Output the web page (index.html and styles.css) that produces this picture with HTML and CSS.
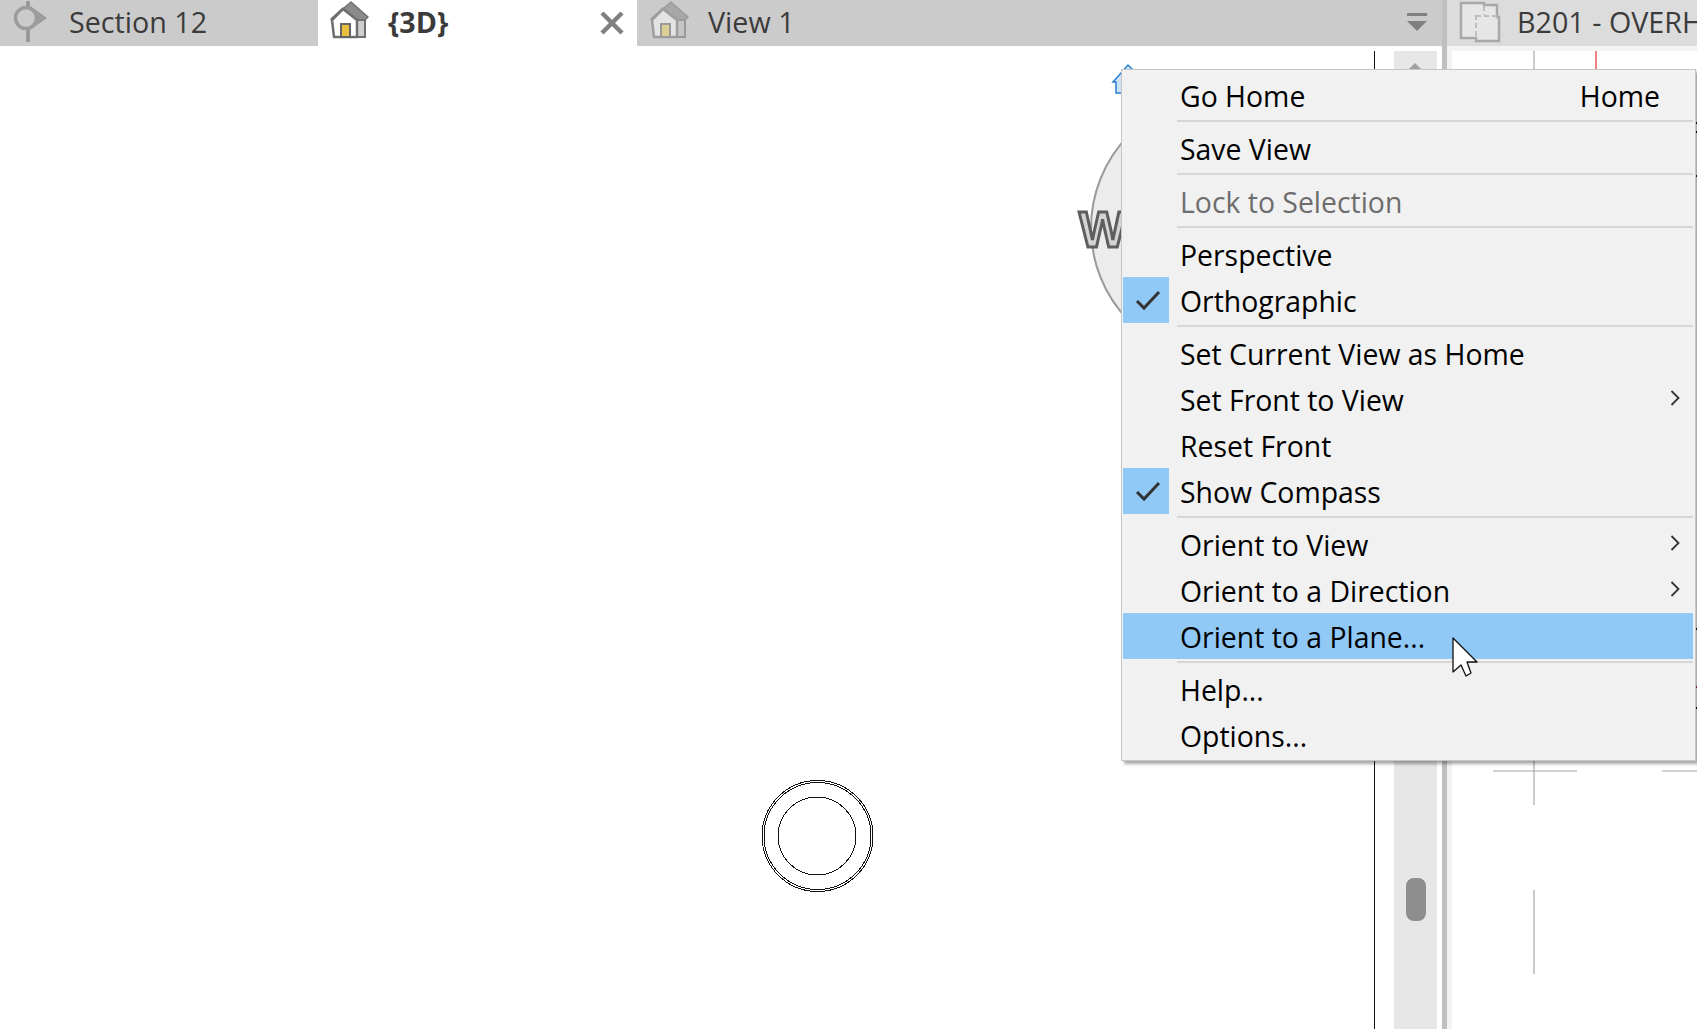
FILE: index.html
```html
<!DOCTYPE html>
<html lang="en">
<head>
<meta charset="utf-8">
<title>View cube menu</title>
<link rel="stylesheet" href="styles.css">
</head>
<body>
<div class="app">
  <div class="left-pane">
    <div class="tabs">
      <div class="tab tab-one">
        <svg class="tab-icon" viewBox="0 0 60 46" width="60" height="46"><path d="M28 1v7M28 29v13" stroke="#939393" stroke-width="3.500"/><path d="M30 6l17 12-17 12z" fill="#9c9c9c"/><circle cx="26" cy="18" r="10.500" fill="#cbcbcb" stroke="#9c9c9c" stroke-width="3.500"/></svg>
        <span class="tab-label">Section 12</span>
      </div>
      <div class="tab tab-active">
        <svg class="tab-icon" viewBox="0 0 60 46" width="60" height="46"><path d="M37 20h8v17h-8z" fill="#cfcfcf" stroke="#6f6f6f" stroke-width="2"/><path d="M11 19L31 2l17 15-3 3-8 0-14-12z" fill="#8b8b8b" stroke="#6f6f6f" stroke-width="1.500" stroke-linejoin="round"/><path d="M12 20L23 9l14 11v17H14z" fill="#fff" stroke="#6f6f6f" stroke-width="2.500" stroke-linejoin="round"/><rect x="21" y="24" width="9" height="13" fill="#e9bf3e" stroke="#666" stroke-width="2"/></svg>
        <span class="tab-label tab-label-bold">{3D}</span>
        <svg class="tab-close" viewBox="0 0 24 24" width="24" height="24"><path d="M2 2l20 20M22 2L2 22" stroke="#808080" stroke-width="4.500"/></svg>
      </div>
      <div class="tab tab-rest">
        <svg class="tab-icon" viewBox="0 0 60 46" width="60" height="46"><path d="M37 20h8v17h-8z" fill="#c6c6c6" stroke="#9a9a9a" stroke-width="2"/><path d="M11 19L31 2l17 15-3 3-8 0-14-12z" fill="#a8a8a8" stroke="#9a9a9a" stroke-width="1.500" stroke-linejoin="round"/><path d="M12 20L23 9l14 11v17H14z" fill="#e4e4e4" stroke="#9e9e9e" stroke-width="2.500" stroke-linejoin="round"/><rect x="21" y="24" width="9" height="13" fill="#dccf96" stroke="#9a9a9a" stroke-width="2"/></svg>
        <span class="tab-label">View 1</span>
        <svg class="tab-menu" viewBox="0 0 20 20" width="20" height="20"><rect x="0" y="0" width="20" height="3" fill="#7f7f7f"/><path d="M0 8h20L10 18z" fill="#7f7f7f"/></svg>
      </div>
    </div>
    <div class="canvas">
      <svg class="canvas-art" viewBox="0 0 1442 983" width="1442" height="983">
        <g fill="none" stroke="#111" stroke-width="1" shape-rendering="crispEdges">
          <circle cx="817.500" cy="790" r="55.500"/><circle cx="817.500" cy="790" r="53.500"/><circle cx="817" cy="790" r="39"/>
        </g>
        <circle cx="1224" cy="182" r="133" fill="#ececec" stroke="#9a9a9a" stroke-width="2"/>
        <path d="M1116 47V36h-3L1128 19l12 12v16z" fill="#cfe3f7" stroke="#2a7fd4" stroke-width="1.500"/>
      </svg>
      <span class="cube-letter">W</span>
      <div class="black-line"></div>
      <div class="scroll-track">
        <span class="scroll-arrow"></span>
        <span class="scroll-thumb"></span>
      </div>
    </div>
  </div>
  <div class="divider"></div>
  <div class="right-pane">
    <div class="tab tab-sheet">
      <svg class="tab-icon" viewBox="0 0 42 44" width="42" height="44"><path d="M2 2H25V4H38V16H40V40H17V37H2z" fill="#e6e6e6" stroke="#a8a8a8" stroke-width="2.500"/><path d="M17 14v22M25 5v9M17 15H38" fill="none" stroke="#bdbdbd" stroke-width="2" stroke-dasharray="5 3"/></svg>
      <span class="tab-label">B201 - OVERH</span>
    </div>
    <div class="sheet">
      <svg class="sheet-art" viewBox="0 0 245 978" width="245" height="978">
        <g stroke="#a8a8a8" stroke-width="1.200" fill="none">
          <path d="M82 0v754M41 720h84M210 720h40M82 839v84"/>
        </g>
        <path d="M144 0v30" stroke="#e03030" stroke-width="1.200"/>
        <path d="M244 71v2M244 80v2M244 124v2M244 577v2M244 656v2" stroke="#111" stroke-width="2"/>
        <path d="M244 635v2" stroke="#c03030" stroke-width="2"/>
      </svg>
    </div>
  </div>
</div>

<div class="menu">
  <div class="row"><span class="gutter"></span><span class="label">Go Home</span><span class="label shortcut">Home</span></div>
  <div class="sep"></div>
  <div class="row"><span class="gutter"></span><span class="label">Save View</span></div>
  <div class="sep"></div>
  <div class="row row-disabled"><span class="gutter"></span><span class="label">Lock to Selection</span></div>
  <div class="sep"></div>
  <div class="row"><span class="gutter"></span><span class="label">Perspective</span></div>
  <div class="row"><span class="gutter gutter-on"><svg class="check" viewBox="0 0 26 22" width="26" height="22"><path d="M2 12l7 7L24 3" fill="none" stroke="#333" stroke-width="3"/></svg></span><span class="label">Orthographic</span></div>
  <div class="sep"></div>
  <div class="row"><span class="gutter"></span><span class="label">Set Current View as Home</span></div>
  <div class="row"><span class="gutter"></span><span class="label">Set Front to View</span><svg class="chev" viewBox="0 0 10 16" width="10" height="16"><path d="M1.500 1L8.500 8l-7 7" fill="none" stroke="#333" stroke-width="1.800"/></svg></div>
  <div class="row"><span class="gutter"></span><span class="label">Reset Front</span></div>
  <div class="row"><span class="gutter gutter-on"><svg class="check" viewBox="0 0 26 22" width="26" height="22"><path d="M2 12l7 7L24 3" fill="none" stroke="#333" stroke-width="3"/></svg></span><span class="label">Show Compass</span></div>
  <div class="sep"></div>
  <div class="row"><span class="gutter"></span><span class="label">Orient to View</span><svg class="chev" viewBox="0 0 10 16" width="10" height="16"><path d="M1.500 1L8.500 8l-7 7" fill="none" stroke="#333" stroke-width="1.800"/></svg></div>
  <div class="row"><span class="gutter"></span><span class="label">Orient to a Direction</span><svg class="chev" viewBox="0 0 10 16" width="10" height="16"><path d="M1.500 1L8.500 8l-7 7" fill="none" stroke="#333" stroke-width="1.800"/></svg></div>
  <div class="row row-hot"><span class="gutter"></span><span class="label">Orient to a Plane...</span></div>
  <div class="sep"></div>
  <div class="row"><span class="gutter"></span><span class="label">Help...</span></div>
  <div class="row"><span class="gutter"></span><span class="label">Options...</span></div>
</div>
<svg class="cursor" viewBox="0 0 26 40" width="26" height="40"><path d="M1 1V35L9 28L14 39L19 36L15 25H25Z" fill="#fff" stroke="#111" stroke-width="1.300" stroke-linejoin="round"/></svg>
</body>
</html>
```
FILE: styles.css
```css
* { box-sizing: border-box; }
html, body { margin: 0; height: 100%; overflow: hidden; background: #fff; }
body { font-family: "Open Sans", "Noto Sans", sans-serif; color: #000; position: relative; }

.app { display: flex; width: 1697px; height: 1029px; }
.left-pane { width: 1442px; display: flex; flex-direction: column; flex: none; }
.tabs { display: flex; height: 46px; flex: none; background: #cbcbcb; }
.tab { display: flex; align-items: center; height: 46px; font-size: 28.7px; color: #3b3b3b; }
.tab-one { width: 318px; gap: 9px; }
.tab-active { width: 319px; padding-left: 2px; background: #fff; gap: 8px; position: relative; }
.tab-rest { flex: 1; padding-left: 3px; gap: 8px; }
.tab-sheet { background: #dcdcdc; padding-left: 12px; gap: 16px; overflow: hidden; white-space: nowrap; }
.tab-icon { flex: none; filter: blur(.5px); }
.tab-label { line-height: 1; padding-bottom: 2px; }
.tab-label-bold { font-weight: 700; }
.tab-close { margin-left: auto; margin-right: 13px; }
.tab-menu { margin-left: auto; margin-right: 15px; }

.canvas { flex: 1; position: relative; overflow: hidden; background: #fff; }
.canvas-art { position: absolute; left: 0; top: 0; }
.cube-letter { position: absolute; left: 1079px; top: 159px; font: 700 50px/1 "Liberation Sans", sans-serif; color: #d4d4d4; -webkit-text-stroke: 3px #5e5e5e; filter: blur(.4px); }
.black-line { position: absolute; left: 1374px; top: 5px; bottom: 0; width: 1px; background: #111; }
.scroll-track { position: absolute; left: 1394px; top: 5px; bottom: 0; width: 43px; background: #e7e7e7; }
.scroll-arrow { position: absolute; left: 12px; top: 12px; width: 0; height: 0; border-left: 9px solid transparent; border-right: 9px solid transparent; border-bottom: 9px solid #a0a0a0; }
.scroll-thumb { position: absolute; left: 12px; top: 827px; width: 20px; height: 43px; border-radius: 8px; background: #8e8e8e; }

.divider { width: 5px; flex: none; background: #c0c0c0; }
.right-pane { flex: 1; min-width: 0; display: flex; flex-direction: column; }
.sheet { flex: 1; position: relative; background: #fff; border-left: 5px solid #f3f3f3; border-top: 5px solid #f3f3f3; }
.sheet-art { position: absolute; left: 0; top: 0; }

.menu { position: absolute; left: 1121px; top: 69px; width: 575px; height: 692px; padding: 2px 2px 2px 1px; background: #f1f1f1; border: 1px solid #c6c6c6; box-shadow: 3px 3px 3px rgba(0,0,0,.35); font-size: 28.4px; }
.row { display: flex; align-items: center; height: 46px; position: relative; }
.gutter { flex: none; width: 46px; height: 46px; margin-right: 11px; display: flex; align-items: center; justify-content: center; }
.gutter-on { background: #90c8f6; }
.check { margin-left: 4px; }
.label { line-height: 1; padding-top: 2px; }
.shortcut { margin-left: auto; margin-right: 33px; }
.row-disabled { color: #6d6d6d; }
.row-hot { background: #90c8f6; }
.sep { height: 7px; margin-left: 54px; padding-top: 2px; }
.sep::before { content: ""; display: block; height: 2px; background: #d7d7d7; }
.chev { position: absolute; right: 13px; top: 14px; }
.cursor { position: absolute; left: 1452px; top: 637px; }
```
